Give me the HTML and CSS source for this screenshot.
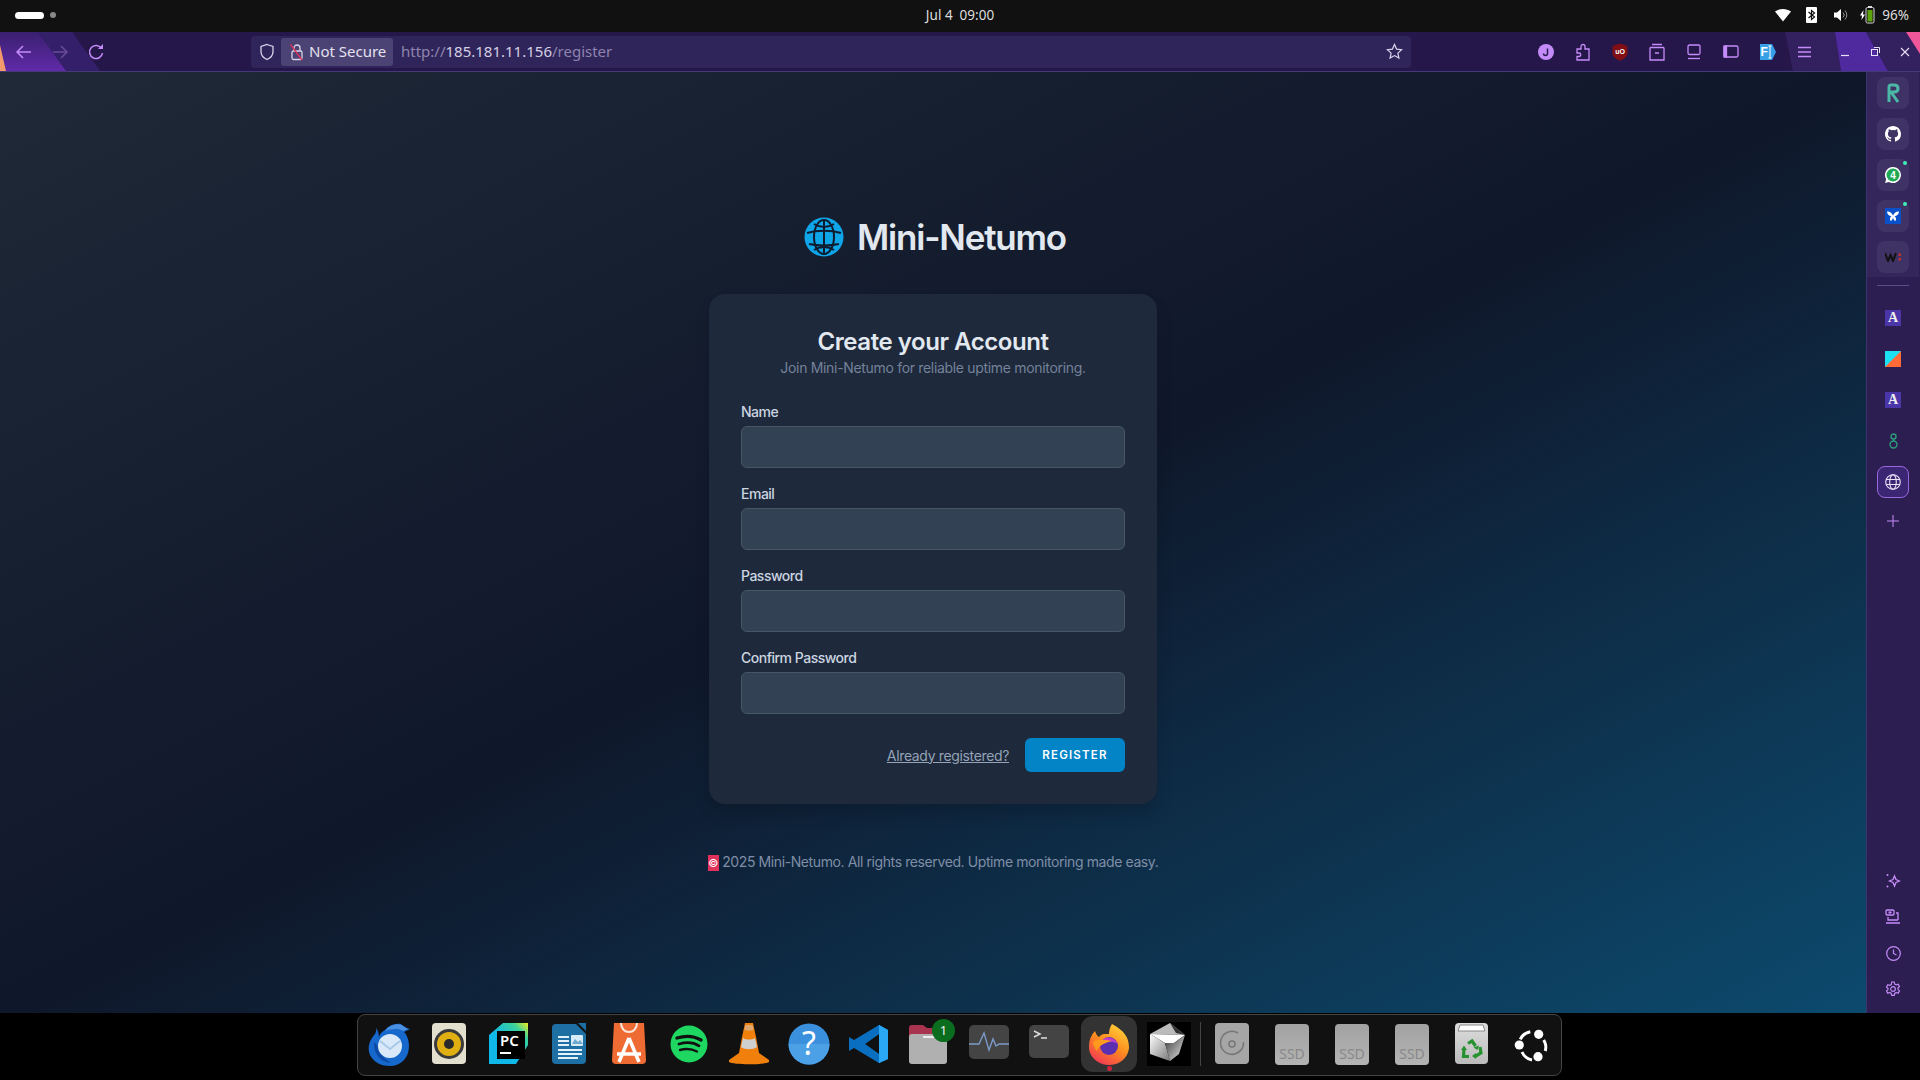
FILE: index.html
```html
<!DOCTYPE html>
<html lang="en">
<head>
    <meta charset="UTF-8">
    <title>Mini-Netumo</title>
    <link rel="stylesheet" href="styles.css">
</head>
<body>
<div class="topbar">
    <div class="workspaces"><span class="pill"></span><span class="dot"></span></div>
    <div class="clock">Jul 4&nbsp; 09:00</div>
    <div class="tray">
        <svg class="wifi" width="16" height="14" viewBox="0 0 16 14"><path d="M0 3.500C4.500 0 11.500 0 16 3.500L8 13.500Z" fill="#fff"/></svg>
        <svg class="bt" width="11" height="16" viewBox="0 0 11 16"><rect width="11" height="16" rx="1" fill="#fff"/><path d="M2.500 5l6 5-3 2.500v-9l3 2.500-6 5" fill="none" stroke="#111" stroke-width="1.200"/></svg>
        <svg class="vol" width="14" height="14" viewBox="0 0 14 14"><path d="M0 4.500h3L7 1v12L3 9.500H0Z" fill="#fff"/><path d="M9 4.500a3.500 3.500 0 0 1 0 5M11 2.500a6.500 6.500 0 0 1 0 9" fill="none" stroke="#999" stroke-width="1"/></svg>
        <svg class="batt" width="15" height="18" viewBox="0 0 15 18"><path d="M3.500 4L0 9.500h2L1.500 14 5 8.500H3Z" fill="#fff"/><rect x="6" y="1.500" width="8" height="15.500" rx="1.500" fill="#111" stroke="#ddd"/><rect x="7.500" y="4" width="5" height="11.500" fill="#5fa30c"/><rect x="8" y="0" width="4" height="1.500" fill="#ddd"/></svg>
        <span class="percent">96%</span>
    </div>
</div>

<div class="toolbar">
    <svg class="toolbar-art" width="1920" height="39" viewBox="0 0 1920 39">
        <defs><linearGradient id="wedge" x1="0" y1="0" x2="0" y2="1"><stop offset="0" stop-color="#3a2070"/><stop offset="1" stop-color="#602aa8"/></linearGradient></defs>
        <path d="M38 0H72L100 39H66Z" fill="#34206a"/>
        <path d="M0 0H38L66 39H0Z" fill="url(#wedge)"/>
        <path d="M0 13L6 39H0Z" fill="#f59a6c"/>
        <path d="M1785 0H1835L1841 39H1793Z" fill="#33205f"/>
        <path d="M1835 0H1866L1888 39H1841Z" fill="#4f2a9e"/>
        <path d="M1866 0H1906L1920 20V39H1888Z" fill="#33205f"/>
        <path d="M1906 0H1920V22Z" fill="#f0569a"/>
    </svg>
    <div class="nav">
        <span class="tool"><svg width="18" height="18" viewBox="0 0 18 18" fill="none" stroke="#c58cf9" stroke-width="1.500"><path d="M16 9H2M8 3L2 9l6 6"/></svg></span>
        <span class="tool"><svg width="18" height="18" viewBox="0 0 18 18" fill="none" stroke="#6b4a9c" stroke-width="1.500"><path d="M2 9h14M10 3l6 6-6 6"/></svg></span>
        <span class="tool"><svg width="18" height="18" viewBox="0 0 18 18" fill="none" stroke="#c58cf9" stroke-width="1.500"><path d="M14.500 5.500A6.500 6.500 0 1 0 15.500 10"/><path d="M11 6h5V1Z" fill="#c58cf9" stroke="none"/></svg></span>
    </div>
    <div class="address">
        <svg class="shield" width="16" height="18" viewBox="0 0 16 18" fill="none" stroke="#d9d4ea" stroke-width="1.300"><path d="M8 1.500l6 2v5c0 4-2.500 6.500-6 8-3.500-1.500-6-4-6-8v-5Z"/></svg>
        <div class="chip">
            <svg width="14" height="18" viewBox="0 0 14 18" fill="none" stroke="#d9d4ea" stroke-width="1.300"><rect x="2" y="8" width="10" height="8.500" rx="1.500"/><path d="M4 8V5a3 3 0 0 1 6 0v3"/><path d="M0.500 1.500L12 17" stroke="#e0315a"/></svg>
            <span>Not Secure</span>
        </div>
        <div class="url">http://<b>185.181.11.156</b>/register</div>
        <svg class="star" width="17" height="17" viewBox="0 0 17 17" fill="none" stroke="#d9d4ea" stroke-width="1.200"><path d="M8.500 1.500l2.100 4.600 5 .6-3.700 3.400 1 5-4.400-2.500-4.400 2.500 1-5L1.400 6.700l5-.6Z"/></svg>
    </div>
    <div class="extensions">
        <span class="tool"><svg width="16" height="16" viewBox="0 0 16 16"><circle cx="8" cy="8" r="8" fill="#c58cf9"/><path d="M9.500 4.500v5a2 2 0 0 1-4 0" fill="none" stroke="#2a1a4e" stroke-width="1.500"/></svg></span>
        <span class="tool"><svg width="14" height="18" viewBox="0 0 14 18" fill="none" stroke="#c58cf9" stroke-width="1.300"><path d="M1 17v-3.500h2a1.700 1.700 0 0 0 0-3.500H1V6h4V3.500a2 2 0 0 1 4 0V6h4v11Z"/></svg></span>
        <span class="tool"><svg width="16" height="18" viewBox="0 0 16 18"><path d="M8 0.500l7.500 2.500v6.500c0 4-3 6.500-7.500 8-4.500-1.500-7.500-4-7.500-8V3Z" fill="#800f15"/><text x="8" y="11" class="ublock">uO</text></svg></span>
        <span class="tool"><svg width="16" height="18" viewBox="0 0 16 18" fill="none" stroke="#c58cf9" stroke-width="1.300"><path d="M3 1.500h10M1 4.500h14M1 4.500V17h14V4.500M6 10h4"/></svg></span>
        <span class="tool"><svg width="14" height="16" viewBox="0 0 14 16" fill="none" stroke="#c58cf9" stroke-width="1.300"><rect x="1" y="1" width="12" height="9.500" rx="1.500"/><path d="M1 14.500h12"/></svg></span>
        <span class="tool"><svg width="16" height="13" viewBox="0 0 16 13" fill="none" stroke="#c58cf9" stroke-width="1.300"><rect x="1" y="1" width="14" height="11" rx="1.500"/><rect x="1" y="1" width="2.500" height="11" fill="#c58cf9"/></svg></span>
        <span class="tool"><svg width="16" height="16" viewBox="0 0 16 16"><path d="M0 0H12L16 8 12 16H0Z" fill="#37a0e6"/><text x="0.500" y="12" class="fi">F</text><path d="M10 2v12M8.500 2h3M8.500 14h3" stroke="#fff" fill="none"/></svg></span>
        <span class="tool"><svg width="13" height="12" viewBox="0 0 13 12" stroke="#c58cf9" stroke-width="1.300"><path d="M0 1.500h13M0 6h13M0 10.500h13"/></svg></span>
    </div>
    <div class="window-btns">
        <span class="tool-win"><svg width="10" height="10" viewBox="0 0 10 10" stroke="#e8e0f5" stroke-width="1.200"><path d="M1 8.500h8"/></svg></span>
        <span class="tool-win"><svg width="9" height="9" viewBox="0 0 9 9" fill="none" stroke="#e8e0f5"><rect x="0.500" y="2.500" width="6" height="6"/><path d="M3 0.500h5.500V6"/></svg></span>
        <span class="tool-win"><svg width="10" height="10" viewBox="0 0 10 10" stroke="#e8e0f5" stroke-width="1.100"><path d="M1 1l8 8M9 1l-8 8"/></svg></span>
    </div>
</div>

<div class="middle">
    <main class="page">
        <div class="logo">
            <svg width="40" height="40" viewBox="0 0 40 40" fill="none">
                <circle cx="20" cy="20" r="19.500" fill="#0ea5e9"/>
                <g stroke="#0f1c30" stroke-width="2">
                    <path d="M10 7c6 4 14 4 20 0M10 33c6-4 14-4 20 0M3 16c10-3 24-3 34 0M5 27c10 2 20 2 30 0"/>
                    <ellipse cx="20" cy="20" rx="10" ry="17"/>
                    <path d="M20 3v34"/>
                </g>
            </svg>
            <span class="logo-text">Mini-Netumo</span>
        </div>
        <form class="card">
            <h1>Create your Account</h1>
            <p class="sub">Join Mini-Netumo for reliable uptime monitoring.</p>
            <div class="field"><label>Name</label><input type="text"></div>
            <div class="field"><label>Email</label><input type="text"></div>
            <div class="field"><label>Password</label><input type="text"></div>
            <div class="field"><label>Confirm Password</label><input type="text"></div>
            <div class="actions">
                <a href="#" class="already">Already registered?</a>
                <button type="button" class="register">REGISTER</button>
            </div>
        </form>
        <div class="footer"><span class="copy">©</span> 2025 Mini-Netumo. All rights reserved. Uptime monitoring made easy.</div>
    </main>

    <aside class="sidebar">
        <div class="side-top">
            <span class="side-btn"><svg width="13" height="20" viewBox="0 0 13 20" fill="none" stroke="#4bb8a5" stroke-width="3"><path d="M2 19V4Q2 2 4 2h3q4 0 4 3.500T7 9H4l7 10"/></svg></span>
            <span class="side-btn"><svg width="16" height="16" viewBox="0 0 16 16"><path fill="#fff" d="M8 0C3.580 0 0 3.580 0 8c0 3.540 2.290 6.530 5.470 7.590.4.070.55-.17.550-.38v-1.340c-2.230.48-2.690-1.070-2.690-1.070-.36-.92-.89-1.170-.89-1.170-.73-.5.050-.49.050-.49.8.060 1.230.83 1.230.83.710 1.220 1.870.87 2.330.66.070-.52.280-.87.510-1.070-1.780-.2-3.640-.89-3.640-3.950 0-.87.310-1.590.820-2.150-.080-.2-.36-1.020.080-2.120 0 0 .67-.21 2.200.82a7.600 7.600 0 0 1 4 0c1.530-1.040 2.200-.82 2.200-.82.440 1.100.160 1.920.080 2.120.510.560.820 1.270.820 2.150 0 3.070-1.870 3.750-3.650 3.950.290.250.540.730.540 1.480v2.200c0 .210.150.460.550.380A8.010 8.010 0 0 0 16 8c0-4.420-3.580-8-8-8Z"/></svg></span>
            <span class="side-btn has-dot"><svg width="18" height="18" viewBox="0 0 18 18"><path d="M9 1a8 8 0 0 0-6.800 12.200L1 17l3.900-1.100A8 8 0 1 0 9 1Z" fill="#fff"/><circle cx="9" cy="9" r="6.500" fill="#1fa855"/><text x="9" y="12.500" class="wa">4</text></svg></span>
            <span class="side-btn has-dot"><svg width="16" height="16" viewBox="0 0 16 16"><rect width="16" height="16" fill="#0a50c8"/><path d="M8 7.500C6.500 4 4 3 2 3.500 2 6 4 8 6.500 8.300 5 9 4.500 11 5.500 13 7 12.500 8 10.500 8 9 8 10.500 9 12.500 10.500 13 11.500 11 11 9 9.500 8.300 12 8 14 6 14 3.500 12 3 9.500 4 8 7.500Z" fill="#fff"/></svg></span>
            <span class="side-btn"><svg width="17" height="10" viewBox="0 0 17 10"><path d="M0 1l3 8 2.500-6L8 9l3-8" fill="none" stroke="#111" stroke-width="2"/><rect x="13.500" y="1.500" width="2.500" height="2.500" fill="#c03030"/><rect x="13.500" y="6" width="2.500" height="2.500" fill="#c03030"/></svg></span>
        </div>
        <div class="side-rule"></div>
        <div class="side-list">
            <span class="side-item"><span class="serif-a">A</span></span>
            <span class="side-item"><svg width="16" height="16" viewBox="0 0 16 16"><rect width="16" height="16" fill="#ff6a36"/><path d="M0 0H16L0 16Z" fill="#1ce1f5"/></svg></span>
            <span class="side-item"><span class="serif-a">A</span></span>
            <span class="side-item"><svg width="9" height="16" viewBox="0 0 9 16" fill="none" stroke="#2d9b7c" stroke-width="1.400"><circle cx="4.500" cy="11.500" r="3.500"/><circle cx="4.500" cy="3.500" r="2.500"/><path d="M4.500 6v2"/></svg></span>
            <span class="side-btn active"><svg width="16" height="16" viewBox="0 0 16 16" fill="none" stroke="#e9e2f7" stroke-width="1.100"><circle cx="8" cy="8" r="7.300"/><ellipse cx="8" cy="8" rx="3.300" ry="7.300"/><path d="M1 5.500h14M1 10.500h14"/></svg></span>
            <span class="side-item plus"><svg width="12" height="12" viewBox="0 0 12 12" stroke="#c58cf9"><path d="M6 0v12M0 6h12"/></svg></span>
        </div>
        <div class="side-bottom">
            <span class="side-item"><svg width="16" height="16" viewBox="0 0 16 16" fill="none" stroke="#c58cf9" stroke-width="1.300"><path d="M9.500 3l1.500 3.500 3.500 1.500-3.500 1.500L9.500 13 8 9.500 4.500 8 8 6.500Z"/><circle cx="2.500" cy="2" r="1" fill="#c58cf9" stroke="none"/><circle cx="2.500" cy="13.500" r="1" fill="#c58cf9" stroke="none"/></svg></span>
            <span class="side-item"><svg width="16" height="16" viewBox="0 0 16 16" fill="none" stroke="#c58cf9" stroke-width="1.300"><rect x="1" y="1" width="8" height="5" rx="1"/><rect x="3.500" y="2.500" width="3" height="2" fill="#c58cf9" stroke="none"/><path d="M11 4h2v7M3 8v3h10M1 14h14" /></svg></span>
            <span class="side-item"><svg width="15" height="15" viewBox="0 0 15 15" fill="none" stroke="#c58cf9" stroke-width="1.200"><circle cx="7.500" cy="7.500" r="6.800"/><path d="M7.500 3.500v4l3 1.500"/></svg></span>
            <span class="side-item"><svg width="16" height="16" viewBox="0 0 16 16" fill="none" stroke="#c58cf9" stroke-width="1.200"><circle cx="8" cy="8" r="2.300"/><path d="M6.700 1h2.600l.4 2 1.600.9 1.900-.7 1.300 2.300-1.500 1.300v1.800l1.500 1.300-1.300 2.300-1.900-.7-1.600.9-.4 2H6.700l-.4-2-1.600-.9-1.900.7-1.300-2.300 1.500-1.300V7.300L1.500 6l1.300-2.300 1.900.7 1.600-.9Z"/></svg></span>
        </div>
    </aside>
</div>

<div class="dockbar">
    <div class="dock">
        <span class="app"><svg width="48" height="48" viewBox="0 0 48 48">
            <path d="M11 8C12 12 10 14 7 18 3 24 3 30 5 35 9 43 17 46 25 46 36 46 44 38 44 26 44 20 42 15 39 12L45 9 38 7 36 4C30 3 24 5 20 10 16 12 14 15 14 18 14 14 13 10 11 8Z" fill="#1768cc"/>
            <path d="M20 11C24 5 32 3 37 5L43 9 38 11C34 8 26 9 20 11Z" fill="#4a90e2"/>
            <path d="M9 22C8 32 14 42 26 43 18 38 13 32 12 25Z" fill="#0b4aa6"/>
            <circle cx="25" cy="26" r="12" fill="#d9e9f9"/>
            <path d="M15 21l10 8 10-8" fill="none" stroke="#a9c9ea" stroke-width="2"/>
        </svg></span>
        <span class="app"><svg width="48" height="48" viewBox="0 0 48 48">
            <rect x="7" y="3" width="34" height="41" rx="4" fill="#e3dfcf"/>
            <circle cx="24" cy="24" r="15" fill="#3a3a3a"/>
            <circle cx="24" cy="24" r="12" fill="#e0b012"/>
            <circle cx="24" cy="24" r="5" fill="#2a2a2a"/>
        </svg></span>
        <span class="app"><svg width="48" height="48" viewBox="0 0 48 48">
            <path d="M4 15L18 3H43V25L31 44H4Z" fill="url(#pcGrad)"/>
            <defs><linearGradient id="pcGrad" x1="0" y1="1" x2="1" y2="0"><stop offset="0.450" stop-color="#0fb8e8"/><stop offset="0.800" stop-color="#3cd29a"/><stop offset="1" stop-color="#f0ee20"/></linearGradient></defs>
            <rect x="12" y="11" width="28" height="28" fill="#000"/>
            <text x="15" y="26" class="pc">PC</text>
            <rect x="15" y="32" width="11" height="2" fill="#fff"/>
        </svg></span>
        <span class="app"><svg width="48" height="48" viewBox="0 0 48 48">
            <path d="M7 8a4 4 0 0 1 4-4h20L41 14V40a4 4 0 0 1-4 4H11a4 4 0 0 1-4-4Z" fill="#1e6fa3"/>
            <path d="M33 3H41V11Z" fill="#1e6fa3"/>
            <path d="M13 17h11M13 21h11M13 25h11M13 30h24M13 34h24M13 38h20" stroke="#e3f1fa" stroke-width="1.800"/>
            <rect x="26" y="15" width="12" height="11" rx="1" fill="#d6eaf7"/>
            <path d="M27 24l3-5 3 3 2-2 3 4Z" fill="#6fa8ce"/>
        </svg></span>
        <span class="app"><svg width="48" height="48" viewBox="0 0 48 48">
            <path d="M9 3H39L41 40a4 4 0 0 1-4 4H11a4 4 0 0 1-4-4Z" fill="#ee6b33"/>
            <path d="M16 3c0 12 16 12 16 0" fill="none" stroke="#fbe7dc" stroke-width="2"/>
            <path d="M24 18L14 42M24 18L34 42M12 34H36" fill="none" stroke="#fff" stroke-width="3.500"/>
        </svg></span>
        <span class="app"><svg width="48" height="48" viewBox="0 0 48 48">
            <circle cx="24" cy="24" r="18.500" fill="#1ed760"/>
            <g fill="none" stroke="#111" stroke-linecap="round"><path d="M12 18c8-2.500 17-2 24 2" stroke-width="3.400"/><path d="M14 24c7-2 15-1.500 20 1.800" stroke-width="2.800"/><path d="M15 30c6-1.600 12-1 17 1.500" stroke-width="2.400"/></g>
        </svg></span>
        <span class="app"><svg width="48" height="48" viewBox="0 0 48 48">
            <path d="M20 3h8l3 14 3 16 10 7v2c-4 3-36 3-40 0v-2l10-7 3-16Z" fill="#f07f0c"/>
            <path d="M18 18c3 2 9 2 12 0l2 9c-4 3-12 3-16 0Z" fill="#cfcfcf"/>
            <path d="M20.500 5h7l1.200 5c-3 1-6.400 1-9.400 0Z" fill="#cfcfcf" opacity="0.500"/>
        </svg></span>
        <span class="app"><svg width="48" height="48" viewBox="0 0 48 48">
            <circle cx="24" cy="24" r="20.500" fill="#3a90dd"/>
            <path d="M3.500 24h41a20.500 20.500 0 0 1-41 0Z" fill="#4ba0e6"/>
            <text x="24" y="35" class="help">?</text>
        </svg></span>
        <span class="app"><svg width="48" height="48" viewBox="0 0 48 48">
            <path d="M34 5L43 10V39L34 43L14 24Z" fill="#1f9cf0"/>
            <path d="M34 5L34 43L43 39V10Z" fill="#2aa8f5"/>
            <path d="M34 14L20 24L34 34V43L9 28L4 31V17L9 20L34 5Z" fill="#0a6fc0"/>
            <path d="M34 14L34 34L20 24Z" fill="#0f1012"/>
        </svg></span>
        <span class="app"><svg width="48" height="48" viewBox="0 0 48 48">
            <path d="M4 8a3 3 0 0 1 3-3h11l4 3h16a3 3 0 0 1 3 3v8H4Z" fill="#a8344f"/>
            <path d="M4 17a3 3 0 0 1 3-3h32a3 3 0 0 1 3 3v24a3 3 0 0 1-3 3H7a3 3 0 0 1-3-3Z" fill="#b0b0b0"/>
            <rect x="18" y="16" width="11" height="2" fill="#eee"/>
        </svg><span class="badge">1</span></span>
        <span class="app"><svg width="48" height="48" viewBox="0 0 48 48">
            <rect x="4" y="5" width="40" height="34" rx="5" fill="#444"/>
            <path d="M4 24H14L19 13 24 30 28 19 31 26 34 24H44" fill="none" stroke="#7c9ac8" stroke-width="1.400"/>
        </svg></span>
        <span class="app"><svg width="48" height="48" viewBox="0 0 48 48">
            <rect x="4" y="5" width="40" height="33" rx="5" fill="#444"/>
            <path d="M9 11l6 3-6 3M16 18h6" fill="none" stroke="#ddd" stroke-width="1.500"/>
        </svg></span>
        <span class="app active-app"><svg width="48" height="48" viewBox="0 0 48 48">
            <defs><linearGradient id="foxGrad" x1="0.800" y1="0" x2="0.200" y2="1"><stop offset="0" stop-color="#ffd23a"/><stop offset="0.500" stop-color="#ff8a1e"/><stop offset="1" stop-color="#f0325a"/></linearGradient></defs>
            <path d="M27 4C34 8 38 11 41 16 44 21 44 26 44 28A20 18 0 0 1 4 26C4 20 6 15 10 11 11 14 12 16 14 17 17 13 21 14 24 14 24 10 25 7 27 4Z" fill="url(#foxGrad)"/>
            <circle cx="24" cy="26" r="9" fill="#5a2fb0"/>
            <path d="M15 22C19 16 29 16 33 24 28 21 21 20 15 22Z" fill="#c23fd0"/>
            <path d="M8 22C14 18 20 20 27 21 20 23 14 25 12 31 10 29 8 25 8 22Z" fill="#ff9a1e"/>
        </svg><span class="run-dot"></span></span>
        <span class="app"><svg width="48" height="48" viewBox="0 0 48 48">
            <defs>
                <linearGradient id="cubeLeft" x1="0" y1="0" x2="1" y2="1"><stop offset="0" stop-color="#fff"/><stop offset="1" stop-color="#777"/></linearGradient>
                <linearGradient id="cubeRight" x1="0" y1="0" x2="1" y2="1"><stop offset="0" stop-color="#333"/><stop offset="1" stop-color="#eee"/></linearGradient>
            </defs>
            <rect x="2" y="2" width="44" height="44" fill="#000"/>
            <path d="M5 14L25 3 40 15Z" fill="#bbb"/>
            <path d="M25 3L40 15 31 13Z" fill="#333"/>
            <path d="M5 14L40 15 29 23 20 23Z" fill="#fff"/>
            <path d="M5 14L20 23 25 41 5 34Z" fill="url(#cubeLeft)"/>
            <path d="M20 23L29 23 40 15 34 34 25 41Z" fill="url(#cubeRight)"/>
        </svg></span>
        <span class="dock-sep"></span>
        <span class="app"><svg width="48" height="48" viewBox="0 0 48 48">
            <rect x="7" y="3" width="34" height="41" rx="4" fill="#a6a6a6"/>
            <path d="M30 13A11.500 11.500 0 1 0 35.500 22" fill="none" stroke="#777" stroke-width="1.600"/>
            <circle cx="24" cy="24" r="3" fill="none" stroke="#777" stroke-width="1.600"/>
        </svg></span>
        <span class="app"><span class="drive">SSD</span></span>
        <span class="app"><span class="drive">SSD</span></span>
        <span class="app"><span class="drive">SSD</span></span>
        <span class="app"><svg width="48" height="48" viewBox="0 0 48 48">
            <defs><linearGradient id="binGrad" x1="0" y1="0" x2="0" y2="1"><stop offset="0" stop-color="#ddd"/><stop offset="1" stop-color="#bbb"/></linearGradient></defs>
            <rect x="7" y="3" width="33" height="41" rx="4" fill="url(#binGrad)"/>
            <path d="M10 11L12 5H35L37 11Z" fill="#fff" stroke="#888"/>
            <g fill="none" stroke="#26922f" stroke-width="3.200">
                <path d="M20 23.500L24 21 27.500 26"/>
                <path d="M32 27L33 33 27 36.500"/>
                <path d="M21 36.500H15.500L16 29"/>
            </g>
            <g fill="#26922f">
                <path d="M25.500 27.500L31 25.500 29.500 30Z"/>
                <path d="M28 33L28 39 24 36Z"/>
                <path d="M13 30L19 30 16 25.500Z"/>
            </g>
        </svg></span>
        <span class="app"><svg width="48" height="48" viewBox="0 0 48 48">
            <g fill="none" stroke="#fff" stroke-width="3"><path d="M12.300 19.300A14 14 0 0 1 22.300 11.700"/><path d="M35.700 20A14 14 0 0 1 37.300 31"/><path d="M14 32A14 14 0 0 0 24 40"/></g>
            <circle cx="30.700" cy="14.300" r="4.600" fill="#fff"/><circle cx="11.300" cy="25" r="4.600" fill="#fff"/><circle cx="30" cy="36.700" r="4.600" fill="#fff"/>
        </svg></span>
    </div>
</div>
</body>
</html>
```

FILE: styles.css
```css
*{
    margin: 0;
    padding: 0;
    box-sizing: border-box;
}
html,body{
    width: 1920px;
    height: 1080px;
    overflow: hidden;
}
body{
    display: flex;
    flex-direction: column;
    font-family: Inter, "Noto Sans", sans-serif;
    background: #000;
}

/* desktop top bar */
.topbar{
    height: 32px;
    padding-bottom: 2px;
    background: #111;
    display: flex;
    align-items: center;
    position: relative;
    color: #ddd;
    font-family: "Noto Sans", sans-serif;
    font-size: 13.5px;
}
.workspaces{
    display: flex;
    align-items: center;
    gap: 6px;
    margin-left: 15px;
}
.pill{
    width: 29px;
    height: 7px;
    border-radius: 4px;
    background: #fff;
}
.dot{
    width: 6px;
    height: 6px;
    border-radius: 50%;
    background: #888;
}
.clock{
    position: absolute;
    left: 0;
    right: 0;
    text-align: center;
}
.tray{
    margin-left: auto;
    display: flex;
    align-items: center;
    margin-right: 11px;
}
.wifi{ margin-right: 15px; }
.bt{ margin-right: 17px; }
.vol{ margin-right: 12px; }
.batt{ margin-right: 7px; }

/* browser toolbar */
.toolbar{
    height: 40px;
    background: #26174a;
    border-bottom: 1px solid #453a78;
    display: flex;
    align-items: center;
    position: relative;
}
.toolbar-art{
    position: absolute;
    left: 0;
    top: 0;
}
.nav,.extensions,.window-btns,.address{
    position: relative;
}
.nav{
    display: flex;
    margin-left: 6px;
}
.tool{
    width: 36px;
    height: 32px;
    display: flex;
    align-items: center;
    justify-content: center;
}
.address{
    margin-left: 137px;
    width: 1160px;
    height: 32px;
    background: #30255a;
    border-radius: 4px;
    display: flex;
    align-items: center;
    font-family: "Noto Sans", sans-serif;
    font-size: 15px;
}
.shield{
    margin-left: 8px;
    margin-right: 6px;
}
.chip{
    width: 112px;
    height: 28px;
    background: #4b4373;
    border-radius: 3px;
    display: flex;
    align-items: center;
    gap: 5px;
    padding-left: 9px;
    color: #e4e0f0;
}
.chip span{
    margin-bottom: 2px;
}
.url{
    margin-left: 8px;
    margin-bottom: 2px;
    color: #8d84ad;
}
.url b{
    font-weight: normal;
    color: #d4cfe4;
}
.star{
    margin-left: auto;
    margin-right: 8px;
}
.extensions{
    margin-left: 116px;
    display: flex;
}
.extensions .tool{
    width: 37px;
}
.window-btns{
    margin-left: 7px;
    display: flex;
}
.tool-win{
    width: 30px;
    height: 32px;
    display: flex;
    align-items: center;
    justify-content: center;
}
.ublock{
    font: bold 7px "Liberation Sans", sans-serif;
    fill: #fff;
    text-anchor: middle;
}
.fi{
    font: bold 12px "Liberation Sans", sans-serif;
    fill: #fff;
}

.middle{
    height: 941px;
    display: flex;
}

/* register page */
.page{
    flex: 1;
    background: linear-gradient(to bottom right, #1f2937, #0f172a, #0c4a6e);
    display: flex;
    flex-direction: column;
    align-items: center;
    padding-top: 144px;
}
.logo{
    display: flex;
    align-items: center;
    gap: 13px;
    height: 42px;
    margin-left: 4px;
}
.logo-text{
    font-size: 35px;
    font-weight: 600;
    color: #e2e8f0;
    letter-spacing: -1.2px;
}
.card{
    width: 448px;
    height: 510px;
    margin-top: 36px;
    padding: 32px;
    background: #1e293b;
    border-radius: 16px;
    box-shadow: 0 10px 15px rgba(0,0,0,0.15);
}
.card h1{
    font-size: 24px;
    font-weight: 600;
    line-height: 32px;
    text-align: center;
    color: #e2e8f0;
    letter-spacing: -0.45px;
}
.sub{
    font-size: 14px;
    line-height: 20px;
    text-align: center;
    color: #74829a;
    letter-spacing: -0.32px;
}
.field{
    margin-top: 16px;
}
.sub + .field{
    margin-top: 24px;
}
.field label{
    display: block;
    font-size: 14px;
    line-height: 20px;
    font-weight: 500;
    color: #cbd5e1;
    letter-spacing: -0.5px;
}
.field input{
    display: block;
    width: 100%;
    height: 42px;
    margin-top: 4px;
    background: #334155;
    border: 1px solid #475569;
    border-radius: 6px;
}
.actions{
    display: flex;
    justify-content: flex-end;
    align-items: center;
    gap: 16px;
    margin-top: 24px;
}
.already{
    font-size: 14px;
    color: #94a3b8;
    letter-spacing: -0.35px;
}
.register{
    width: 100px;
    height: 34px;
    background: #0284c7;
    color: #fff;
    border: 0;
    border-radius: 6px;
    font-family: Inter, sans-serif;
    font-size: 11.5px;
    font-weight: 600;
    letter-spacing: 1.2px;
}
.footer{
    margin-top: 48px;
    font-size: 14px;
    line-height: 20px;
    color: #7f8ea6;
    letter-spacing: -0.4px;
}
.copy{
    display: inline-block;
    width: 11px;
    height: 16px;
    line-height: 16px;
    background: #e0315a;
    color: #fff;
    font-size: 11px;
    text-align: center;
    letter-spacing: 0;
}

/* browser sidebar */
.sidebar{
    width: 54px;
    padding-right: 1px;
    background: #2c1e50;
    border-left: 1px solid #3d3270;
    display: flex;
    flex-direction: column;
    align-items: center;
}
.side-top{
    width: 100%;
    height: 205px;
    background: #34265a;
    padding-top: 5px;
    display: flex;
    flex-direction: column;
    align-items: center;
    gap: 9px;
}
.side-btn{
    width: 32px;
    height: 32px;
    border-radius: 8px;
    background: #3f3265;
    display: flex;
    align-items: center;
    justify-content: center;
    position: relative;
    flex: none;
}
.has-dot::after{
    content: "";
    position: absolute;
    right: 2px;
    top: 2px;
    width: 4px;
    height: 4px;
    border-radius: 50%;
    background: #3ff0b8;
}
.wa{
    font: bold 10px "Liberation Sans", sans-serif;
    fill: #fff;
    text-anchor: middle;
}
.side-rule{
    width: 32px;
    height: 1px;
    margin-top: 8px;
    background: #5a4d85;
}
.side-list{
    display: flex;
    flex-direction: column;
    align-items: center;
    margin-top: 16px;
    gap: 9px;
}
.side-item{
    width: 32px;
    height: 32px;
    display: flex;
    align-items: center;
    justify-content: center;
    flex: none;
}
.serif-a{
    width: 16px;
    height: 16px;
    background: #4a36a8;
    color: #eee;
    font: bold 14px/16px "Liberation Serif", serif;
    text-align: center;
}
.side-btn.active{
    background: #3a2673;
    border: 1px solid #9a68e0;
}
.side-item.plus{
    height: 24px;
    margin-top: 2px;
}
.side-bottom{
    margin-top: auto;
    margin-bottom: 8px;
    display: flex;
    flex-direction: column;
    align-items: center;
    gap: 4px;
}

/* dock */
.dockbar{
    height: 67px;
    background: #000;
    padding-top: 1px;
}
.dock{
    width: 1205px;
    height: 62px;
    margin-left: 357px;
    padding: 0 0 2px 1px;
    background: #111;
    border: 1px solid #444;
    border-radius: 8px;
    display: flex;
    align-items: center;
}
.app{
    width: 60px;
    height: 56px;
    flex: none;
    display: flex;
    align-items: center;
    justify-content: center;
    position: relative;
}
.active-app{
    width: 56px;
    margin: 0 2px;
    background: #333;
    border-radius: 12px;
}
.run-dot{
    position: absolute;
    left: 26px;
    bottom: 1px;
    width: 5px;
    height: 5px;
    border-radius: 50%;
    background: #d0213f;
}
.badge{
    position: absolute;
    left: 33px;
    top: 3px;
    width: 23px;
    height: 23px;
    border-radius: 50%;
    background: #0b6e1f;
    color: #eee;
    font-family: "Noto Sans", sans-serif;
    font-size: 13px;
    line-height: 23px;
    text-align: center;
}
.help{
    font: 32px "Noto Sans", sans-serif;
    fill: #fff;
    text-anchor: middle;
}
.pc{
    font: 600 15px "Noto Sans", sans-serif;
    fill: #fff;
}
.dock-sep{
    width: 1px;
    height: 44px;
    background: #444;
    flex: none;
    margin: 0 1px;
}
.drive{
    width: 34px;
    height: 41px;
    padding-bottom: 4px;
    background: linear-gradient(#a2a2a2, #b4b4b4);
    border-radius: 4px;
    color: #888;
    font: 14px/14px "Noto Sans", sans-serif;
    display: flex;
    align-items: flex-end;
    justify-content: center;
}
```
